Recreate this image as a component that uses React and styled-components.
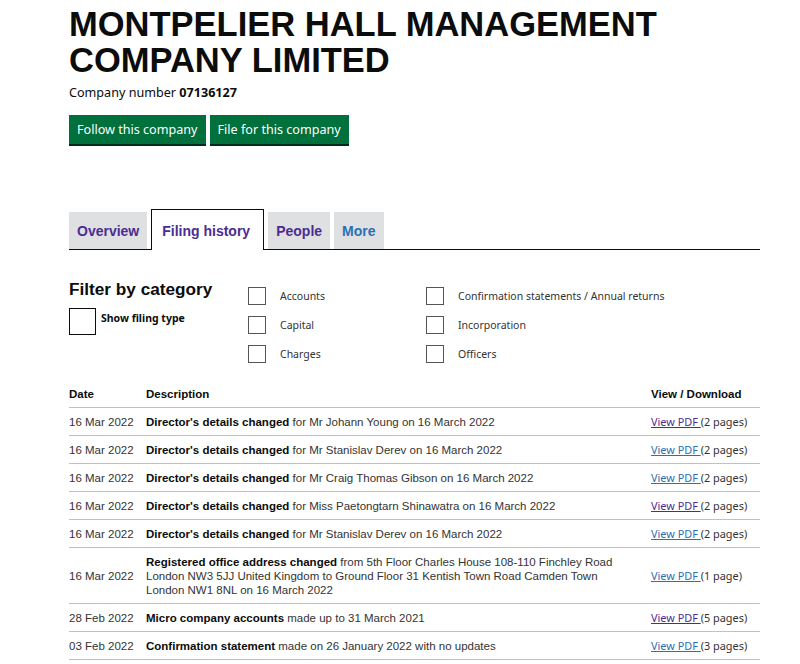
import React from "react";
import styled, { createGlobalStyle } from "styled-components";

const GlobalStyle = createGlobalStyle`
  body {
    margin: 0;
    background: #fff;
    color: #0b0c0c;
    font-family: "Liberation Sans", Arial, sans-serif;
  }
`;

const Page = styled.div`
  width: 691px;
  padding: 0 0 0 69px;
`;

const Title = styled.h1`
  margin: 0;
  padding-top: 6px;
  font-size: 34.5px;
  line-height: 36px;
  font-weight: 700;
  color: #0b0c0c;
`;

const CompanyNumber = styled.p`
  margin: 6px 0 0;
  font-family: "Noto Sans", sans-serif;
  font-size: 12.6px;
  line-height: 18px;
  color: #0b0c0c;

  strong {
    font-weight: 700;
  }
`;

const Actions = styled.div`
  display: flex;
  gap: 4px;
  margin-top: 13px;
`;

const GreenButton = styled.a`
  display: inline-flex;
  align-items: center;
  height: 29px;
  padding: 0 8px;
  background: #00703c;
  box-shadow: 0 2px 0 #002d18;
  color: #fff;
  font-family: "Noto Sans", sans-serif;
  font-size: 12.6px;
  text-decoration: none;
`;

const Tabs = styled.ul`
  display: flex;
  align-items: flex-end;
  gap: 4px;
  list-style: none;
  margin: 65px 0 0;
  padding: 0;
  border-bottom: 1px solid #0b0c0c;
  height: 40px;
`;

const Tab = styled.li`
  display: flex;
  align-items: center;
  box-sizing: border-box;
  height: ${({ active }) => (active ? "41px" : "37px")};
  margin-bottom: ${({ active }) => (active ? "-1px" : "0")};
  padding: ${({ active }) => (active ? "2px 13px 0 10px" : "0 8px")};
  background: ${({ active }) => (active ? "#fff" : "#dee0e2")};
  border: ${({ active }) => (active ? "1px solid #0b0c0c" : "none")};
  border-bottom: none;
  font-size: 14px;
  font-weight: 700;
  color: ${({ blue }) => (blue ? "#2b6fb5" : "#4c2c92")};
`;

const Filter = styled.div`
  display: grid;
  grid-template-columns: 179px 178px 1fr;
  margin-top: 29px;
`;

const FilterHeading = styled.h2`
  margin: 0;
  font-size: 17.2px;
  line-height: 20px;
  font-weight: 700;
`;

const ShowType = styled.label`
  display: flex;
  align-items: flex-start;
  gap: 5px;
  margin-top: 12px;
  font-family: "Noto Sans", sans-serif;
  font-size: 10.5px;
  font-weight: 700;
  line-height: 14px;
`;

const BigBox = styled.span`
  flex: none;
  width: 25px;
  height: 25px;
  border: 1px solid #0b0c0c;
  margin-top: -3px;
`;

const Column = styled.div`
  display: flex;
  flex-direction: column;
  gap: 11px;
  padding-top: 8px;
`;

const Option = styled.label`
  display: flex;
  align-items: center;
  gap: 14px;
  height: 18px;
  font-family: "Noto Sans", sans-serif;
  font-size: 10.5px;
  color: #333;
`;

const Box = styled.span`
  flex: none;
  width: 16px;
  height: 16px;
  border: 1px solid #555;
`;

const Table = styled.table`
  width: 100%;
  margin-top: 17px;
  border-collapse: collapse;
  font-size: 11.5px;
  color: #333;
`;

const Th = styled.th`
  text-align: left;
  font-weight: 700;
  color: #0b0c0c;
  padding: 7px 0 6px;
  line-height: 14px;
  border-bottom: 1px solid #bfc1c3;
  width: ${({ w }) => w || "auto"};
`;

const Td = styled.td`
  padding: 7px 0 6px;
  line-height: 14px;
  vertical-align: middle;
  border-bottom: 1px solid #bfc1c3;
`;

const DescCell = styled(Td)`
  padding-right: 30px;

  b {
    color: #0b0c0c;
  }
`;

const Download = styled.span`
  font-family: "Noto Sans", sans-serif;
  font-size: 10.9px;
  white-space: nowrap;
`;

const PdfLink = styled.a`
  color: ${({ visited }) => (visited ? "#4c2c92" : "#2b6fb5")};
  text-decoration: underline;
`;

const categories = [
  ["Accounts", "Capital", "Charges"],
  ["Confirmation statements / Annual returns", "Incorporation", "Officers"],
];

const filings = [
  { date: "16 Mar 2022", title: "Director's details changed", rest: "for Mr Johann Young on 16 March 2022", pages: "2 pages", visited: true },
  { date: "16 Mar 2022", title: "Director's details changed", rest: "for Mr Stanislav Derev on 16 March 2022", pages: "2 pages" },
  { date: "16 Mar 2022", title: "Director's details changed", rest: "for Mr Craig Thomas Gibson on 16 March 2022", pages: "2 pages" },
  { date: "16 Mar 2022", title: "Director's details changed", rest: "for Miss Paetongtarn Shinawatra on 16 March 2022", pages: "2 pages", visited: true },
  { date: "16 Mar 2022", title: "Director's details changed", rest: "for Mr Stanislav Derev on 16 March 2022", pages: "2 pages" },
  {
    date: "16 Mar 2022",
    title: "Registered office address changed",
    rest: "from 5th Floor Charles House 108-110 Finchley Road London NW3 5JJ United Kingdom to Ground Floor 31 Kentish Town Road Camden Town London NW1 8NL on 16 March 2022",
    pages: "1 page",
  },
  { date: "28 Feb 2022", title: "Micro company accounts", rest: "made up to 31 March 2021", pages: "5 pages", visited: true },
  { date: "03 Feb 2022", title: "Confirmation statement", rest: "made on 26 January 2022 with no updates", pages: "3 pages" },
];

export default function App() {
  return (
    <Page>
      <GlobalStyle />
      <Title>
        MONTPELIER HALL MANAGEMENT
        <br />
        COMPANY LIMITED
      </Title>
      <CompanyNumber>
        Company number <strong>07136127</strong>
      </CompanyNumber>
      <Actions>
        <GreenButton>Follow this company</GreenButton>
        <GreenButton>File for this company</GreenButton>
      </Actions>

      <Tabs>
        <Tab>Overview</Tab>
        <Tab active>Filing history</Tab>
        <Tab>People</Tab>
        <Tab blue>More</Tab>
      </Tabs>

      <Filter>
        <div>
          <FilterHeading>Filter by category</FilterHeading>
          <ShowType>
            <BigBox />
            Show filing type
          </ShowType>
        </div>
        {categories.map((col, i) => (
          <Column key={i}>
            {col.map((c) => (
              <Option key={c}>
                <Box />
                {c}
              </Option>
            ))}
          </Column>
        ))}
      </Filter>

      <Table>
        <thead>
          <tr>
            <Th w="77px">Date</Th>
            <Th>Description</Th>
            <Th w="109px">View / Download</Th>
          </tr>
        </thead>
        <tbody>
          {filings.map((f, i) => (
            <tr key={i}>
              <Td>{f.date}</Td>
              <DescCell>
                <b>{f.title}</b> {f.rest}
              </DescCell>
              <Td>
                <Download>
                  <PdfLink visited={f.visited}>View PDF </PdfLink>({f.pages})
                </Download>
              </Td>
            </tr>
          ))}
        </tbody>
      </Table>
    </Page>
  );
}
